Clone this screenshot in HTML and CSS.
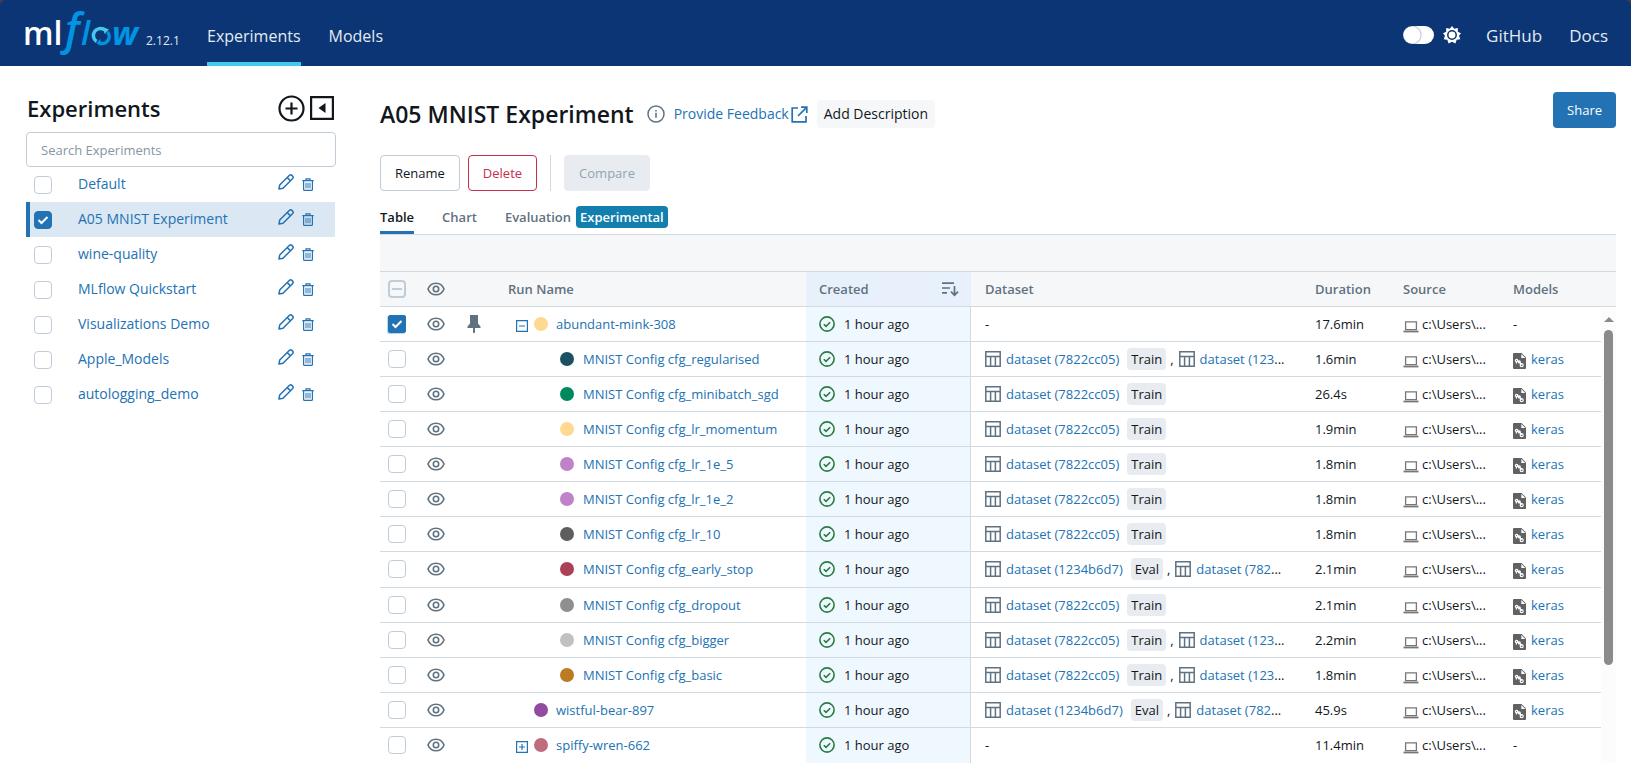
FILE: index.html
```html
<!DOCTYPE html>
<html lang="en">
<head>
<meta charset="utf-8">
<title>A05 MNIST Experiment - MLflow</title>
<link rel="stylesheet" href="styles.css">
</head>
<body>
<svg class="sprite" aria-hidden="true">
  <symbol id="eye" viewBox="0 0 18 18"><g fill="none" stroke="currentColor" stroke-width="1.6"><path d="M1 9C2.5 5.2 5.5 3.2 9 3.2S15.500 5.200 17 9c-1.500 3.800-4.500 5.800-8 5.800S2.500 12.800 1 9z"/><circle cx="9" cy="9" r="2.700"/></g></symbol>
  <symbol id="pin" viewBox="0 0 16 20"><path fill="currentColor" d="M4 1h8v8.500l2.500 3V14H9v4.500l-1 .8-1-.8V14H1.500v-1.500L4 9.500z"/></symbol>
  <symbol id="ok" viewBox="0 0 18 18"><g fill="none" stroke="currentColor" stroke-width="1.600"><circle cx="9" cy="9" r="7.100"/><path d="M5.800 9.200l2.200 2.200 4.200-4.200"/></g></symbol>
  <symbol id="grid" viewBox="0 0 16 16"><path fill="none" stroke="currentColor" stroke-width="1.500" d="M.8.8h14.400v14.400H.8zM.8 5.500h14.400M5.600 5.500v9.700M10.400 5.500v9.700"/></symbol>
  <symbol id="laptop" viewBox="0 0 16 12"><path fill="none" stroke="currentColor" stroke-width="1.300" d="M2.600.9h10.800v7.800H2.600z"/><path fill="currentColor" d="M.5 9.600h15v1.800H.5z"/></symbol>
  <symbol id="model" viewBox="0 0 13 16"><path fill="#5f6163" d="M1 0h7.500L13 4.500V15a1 1 0 0 1-1 1H1a1 1 0 0 1-1-1V1a1 1 0 0 1 1-1z"/><path fill="#fff" d="M8.300 1v4h4z"/><g fill="none" stroke="#fff" stroke-width="1.200"><path d="M4 7.500l2.500 1.200M6.500 9l2 3"/><circle cx="3.600" cy="7.600" r="1.200"/><circle cx="6.300" cy="8.900" r="1"/><circle cx="8.700" cy="12.200" r="1.500"/><path d="M3.400 8.500v2"/></g></symbol>
  <symbol id="pencil" viewBox="0 0 16 16"><g fill="none" stroke="currentColor" stroke-width="1.500" stroke-linejoin="round"><path d="M1 15l.7-4L11.500 1.300q1.200-1 2.400.1l.7.700q1.100 1.200.1 2.400L5 14.300z"/><path d="M9.300 3.600l3.100 3.100"/></g></symbol>
  <symbol id="trash" viewBox="0 0 12 13"><g fill="none" stroke="currentColor"><path stroke-width="1.200" d="M.3 2.700h11.400M4 2.500V.8h4v1.700M1.600 2.700v8.700q0 1 1 1h6.800q1 0 1-1V2.700"/><path d="M4 4.800v5.600M6 4.800v5.600M8 4.800v5.600"/></g></symbol>
  <symbol id="minus" viewBox="0 0 12 12"><path fill="none" stroke="currentColor" stroke-width="1.200" d="M.6.6h10.800v10.800H.6zM3 6h6"/></symbol>
  <symbol id="plus" viewBox="0 0 12 12"><path fill="none" stroke="currentColor" stroke-width="1.200" d="M.6.6h10.800v10.800H.6zM3 6h6M6 3v6"/></symbol>
</svg>

<div class="topwrap">
<header class="topbar">
  <a class="brand" href="#" aria-label="mlflow home">
    <svg class="logo" viewBox="0 0 116 50" role="img" aria-label="mlflow">
      <text class="logo-ml" x="-1" y="37">ml</text>
      <text class="logo-f" x="41" y="37">f</text>
      <text class="logo-l" x="57" y="37">l</text>
      <path class="ring-light" d="M72.500 33.500A7 7 0 0 1 80.500 21.700"/>
      <path class="ring-dark" d="M83.500 24a7 7 0 0 1-9 10.500"/>
      <path fill="#43c9ed" d="M79 19l6 2.500-4.500 4.500z"/>
      <path fill="#0194e2" d="M77 37.500l-5-2.500 4.500-4z"/>
      <text class="logo-w" x="88" y="37">w</text>
    </svg>
  </a>
  <span class="version">2.12.1</span>
  <nav class="nav">
    <a class="active" href="#">Experiments</a>
    <a href="#">Models</a>
  </nav>
  <div class="tools">
    <input class="switch" type="checkbox" aria-label="Dark theme">
    <svg class="sun" viewBox="0 0 18 18"><path fill="#fff" d="M9 0l2.200 2.800L14.900 2l-.1 3.700L18 7.200 16 9.800l1.300 3.400-3.600.6-1.300 3.700L9 15.800l-3.400 1.700-1.300-3.700-3.600-.6L2 9.800 0 7.200l3.200-1.500L3.100 2l3.700.8z"/><circle cx="9" cy="9" r="4.200" fill="#fff" stroke="#0b3574" stroke-width="1.500"/></svg>
  </div>
  <nav class="links"><a href="#">GitHub</a><a href="#">Docs</a></nav>
</header>
</div>

<div class="page">
<aside class="sidebar">
  <div class="side-head">
    <h2>Experiments</h2>
    <button class="icon-btn" aria-label="New experiment"><svg width="27" height="27" viewBox="0 0 27 27"><g fill="none" stroke="#11171c" stroke-width="2.200"><circle cx="13.500" cy="13.500" r="12"/><path d="M7.500 13.500h12M13.500 7.500v12"/></g></svg></button>
    <button class="icon-btn" aria-label="Collapse sidebar"><svg width="24" height="24" viewBox="0 0 24 24"><path fill="none" stroke="#11171c" stroke-width="2.200" d="M1.100 1.100h21.800v21.800H1.100z"/><path fill="#11171c" d="M15.500 7v10L8.500 12z"/></svg></button>
  </div>
  <input class="search" type="text" placeholder="Search Experiments" aria-label="Search Experiments">
  <ul class="exps">
    <li><input class="box" type="checkbox" aria-label="Default"><a href="#">Default</a><button class="edit" aria-label="Rename"><svg width="16" height="16"><use href="#pencil"/></svg></button><button class="del" aria-label="Delete"><svg width="12" height="13"><use href="#trash"/></svg></button></li>
    <li class="on"><input class="box" type="checkbox" checked aria-label="A05 MNIST Experiment"><a href="#">A05 MNIST Experiment</a><button class="edit" aria-label="Rename"><svg width="16" height="16"><use href="#pencil"/></svg></button><button class="del" aria-label="Delete"><svg width="12" height="13"><use href="#trash"/></svg></button></li>
    <li><input class="box" type="checkbox" aria-label="wine-quality"><a href="#">wine-quality</a><button class="edit" aria-label="Rename"><svg width="16" height="16"><use href="#pencil"/></svg></button><button class="del" aria-label="Delete"><svg width="12" height="13"><use href="#trash"/></svg></button></li>
    <li><input class="box" type="checkbox" aria-label="MLflow Quickstart"><a href="#">MLflow Quickstart</a><button class="edit" aria-label="Rename"><svg width="16" height="16"><use href="#pencil"/></svg></button><button class="del" aria-label="Delete"><svg width="12" height="13"><use href="#trash"/></svg></button></li>
    <li><input class="box" type="checkbox" aria-label="Visualizations Demo"><a href="#">Visualizations Demo</a><button class="edit" aria-label="Rename"><svg width="16" height="16"><use href="#pencil"/></svg></button><button class="del" aria-label="Delete"><svg width="12" height="13"><use href="#trash"/></svg></button></li>
    <li><input class="box" type="checkbox" aria-label="Apple_Models"><a href="#">Apple_Models</a><button class="edit" aria-label="Rename"><svg width="16" height="16"><use href="#pencil"/></svg></button><button class="del" aria-label="Delete"><svg width="12" height="13"><use href="#trash"/></svg></button></li>
    <li><input class="box" type="checkbox" aria-label="autologging_demo"><a href="#">autologging_demo</a><button class="edit" aria-label="Rename"><svg width="16" height="16"><use href="#pencil"/></svg></button><button class="del" aria-label="Delete"><svg width="12" height="13"><use href="#trash"/></svg></button></li>
  </ul>
</aside>

<main class="main">
  <div class="title-row">
    <h1>A05 MNIST Experiment</h1>
    <svg class="info" viewBox="0 0 18 18"><circle cx="9" cy="9" r="8" fill="none" stroke="#5f7281" stroke-width="1.500"/><path fill="#5f7281" d="M8.200 7.800h1.600v5H8.200zM8.200 5h1.600v1.600H8.200z"/></svg>
    <a class="feedback" href="#">Provide Feedback<svg width="17" height="17" viewBox="0 0 17 17"><path fill="none" stroke="currentColor" stroke-width="1.700" d="M7 2H1.200v13.800H15V10M10 1.200h5.800V7M15.600 1.400L7 10"/></svg></a>
    <button class="desc">Add Description</button>
    <button class="share">Share</button>
  </div>
  <div class="actions">
    <button class="btn">Rename</button>
    <button class="btn danger">Delete</button>
    <span class="sep"></span>
    <button class="btn muted" disabled>Compare</button>
  </div>
  <div class="tabs" role="tablist">
    <button class="tab sel" role="tab" aria-selected="true">Table</button>
    <button class="tab" role="tab">Chart</button>
    <button class="tab" role="tab">Evaluation<span class="badge">Experimental</span></button>
  </div>
  <div class="band"></div>
  <div class="grid">
  <table>
    <colgroup><col class="c-check"><col class="c-eye"><col class="c-pin"><col class="c-name"><col class="c-created"><col><col class="c-dur"><col class="c-src"><col class="c-models"><col class="c-bar"></colgroup>
    <thead><tr>
      <th><span class="mid"><input class="box" id="all" type="checkbox" aria-label="Select all runs"><span class="dash"></span></span></th>
      <th><svg class="eye"><use href="#eye"/></svg></th><th></th>
      <th class="text">Run Name</th>
      <th class="text created"><span class="sorted">Created<svg width="17" height="15" viewBox="0 0 17 15"><path fill="none" stroke="currentColor" stroke-width="1.700" d="M0 1.200h12M0 6h8M0 10.800h5M12.500 4v9M9 9.700l3.500 3.600L16 9.700"/></svg></span></th>
      <th class="text">Dataset</th><th class="text">Duration</th><th class="text">Source</th><th class="text">Models</th><th></th>
    </tr></thead>
    <tbody>
    <tr><td><input class="box square" type="checkbox" checked aria-label="Select abundant-mink-308"></td><td><svg class="eye"><use href="#eye"/></svg></td><td><svg class="pin"><use href="#pin"/></svg></td><td><div class="run"><button class="tog" aria-label="Collapse"><svg width="12" height="12"><use href="#minus"/></svg></button><i class="dot yellow"></i><a href="#">abundant-mink-308</a></div></td><td class="created"><span class="when"><svg class="ok"><use href="#ok"/></svg>1 hour ago</span></td><td class="text">-</td><td class="text">17.6min</td><td class="text src"><svg class="lap"><use href="#laptop"/></svg>c:\Users\...</td><td class="text">-</td></tr>
    <tr><td><input class="box" type="checkbox" aria-label="Select cfg_regularised"></td><td><svg class="eye"><use href="#eye"/></svg></td><td></td><td><div class="run child"><i class="dot teal"></i><a href="#">MNIST Config cfg_regularised</a></div></td><td class="created"><span class="when"><svg class="ok"><use href="#ok"/></svg>1 hour ago</span></td><td class="text"><svg class="ds"><use href="#grid"/></svg><a href="#">dataset (7822cc05)</a><span class="tag">Train</span><span class="comma">,</span><svg class="ds"><use href="#grid"/></svg><a href="#">dataset (123</a>...</td><td class="text">1.6min</td><td class="text src"><svg class="lap"><use href="#laptop"/></svg>c:\Users\...</td><td class="text"><svg class="mod"><use href="#model"/></svg><a href="#">keras</a></td></tr>
    <tr><td><input class="box" type="checkbox" aria-label="Select cfg_minibatch_sgd"></td><td><svg class="eye"><use href="#eye"/></svg></td><td></td><td><div class="run child"><i class="dot green"></i><a href="#">MNIST Config cfg_minibatch_sgd</a></div></td><td class="created"><span class="when"><svg class="ok"><use href="#ok"/></svg>1 hour ago</span></td><td class="text"><svg class="ds"><use href="#grid"/></svg><a href="#">dataset (7822cc05)</a><span class="tag">Train</span></td><td class="text">26.4s</td><td class="text src"><svg class="lap"><use href="#laptop"/></svg>c:\Users\...</td><td class="text"><svg class="mod"><use href="#model"/></svg><a href="#">keras</a></td></tr>
    <tr><td><input class="box" type="checkbox" aria-label="Select cfg_lr_momentum"></td><td><svg class="eye"><use href="#eye"/></svg></td><td></td><td><div class="run child"><i class="dot yellow"></i><a href="#">MNIST Config cfg_lr_momentum</a></div></td><td class="created"><span class="when"><svg class="ok"><use href="#ok"/></svg>1 hour ago</span></td><td class="text"><svg class="ds"><use href="#grid"/></svg><a href="#">dataset (7822cc05)</a><span class="tag">Train</span></td><td class="text">1.9min</td><td class="text src"><svg class="lap"><use href="#laptop"/></svg>c:\Users\...</td><td class="text"><svg class="mod"><use href="#model"/></svg><a href="#">keras</a></td></tr>
    <tr><td><input class="box" type="checkbox" aria-label="Select cfg_lr_1e_5"></td><td><svg class="eye"><use href="#eye"/></svg></td><td></td><td><div class="run child"><i class="dot lilac"></i><a href="#">MNIST Config cfg_lr_1e_5</a></div></td><td class="created"><span class="when"><svg class="ok"><use href="#ok"/></svg>1 hour ago</span></td><td class="text"><svg class="ds"><use href="#grid"/></svg><a href="#">dataset (7822cc05)</a><span class="tag">Train</span></td><td class="text">1.8min</td><td class="text src"><svg class="lap"><use href="#laptop"/></svg>c:\Users\...</td><td class="text"><svg class="mod"><use href="#model"/></svg><a href="#">keras</a></td></tr>
    <tr><td><input class="box" type="checkbox" aria-label="Select cfg_lr_1e_2"></td><td><svg class="eye"><use href="#eye"/></svg></td><td></td><td><div class="run child"><i class="dot lilac"></i><a href="#">MNIST Config cfg_lr_1e_2</a></div></td><td class="created"><span class="when"><svg class="ok"><use href="#ok"/></svg>1 hour ago</span></td><td class="text"><svg class="ds"><use href="#grid"/></svg><a href="#">dataset (7822cc05)</a><span class="tag">Train</span></td><td class="text">1.8min</td><td class="text src"><svg class="lap"><use href="#laptop"/></svg>c:\Users\...</td><td class="text"><svg class="mod"><use href="#model"/></svg><a href="#">keras</a></td></tr>
    <tr><td><input class="box" type="checkbox" aria-label="Select cfg_lr_10"></td><td><svg class="eye"><use href="#eye"/></svg></td><td></td><td><div class="run child"><i class="dot charcoal"></i><a href="#">MNIST Config cfg_lr_10</a></div></td><td class="created"><span class="when"><svg class="ok"><use href="#ok"/></svg>1 hour ago</span></td><td class="text"><svg class="ds"><use href="#grid"/></svg><a href="#">dataset (7822cc05)</a><span class="tag">Train</span></td><td class="text">1.8min</td><td class="text src"><svg class="lap"><use href="#laptop"/></svg>c:\Users\...</td><td class="text"><svg class="mod"><use href="#model"/></svg><a href="#">keras</a></td></tr>
    <tr><td><input class="box" type="checkbox" aria-label="Select cfg_early_stop"></td><td><svg class="eye"><use href="#eye"/></svg></td><td></td><td><div class="run child"><i class="dot crimson"></i><a href="#">MNIST Config cfg_early_stop</a></div></td><td class="created"><span class="when"><svg class="ok"><use href="#ok"/></svg>1 hour ago</span></td><td class="text"><svg class="ds"><use href="#grid"/></svg><a href="#">dataset (1234b6d7)</a><span class="tag">Eval</span><span class="comma">,</span><svg class="ds"><use href="#grid"/></svg><a href="#">dataset (782</a>...</td><td class="text">2.1min</td><td class="text src"><svg class="lap"><use href="#laptop"/></svg>c:\Users\...</td><td class="text"><svg class="mod"><use href="#model"/></svg><a href="#">keras</a></td></tr>
    <tr><td><input class="box" type="checkbox" aria-label="Select cfg_dropout"></td><td><svg class="eye"><use href="#eye"/></svg></td><td></td><td><div class="run child"><i class="dot grey"></i><a href="#">MNIST Config cfg_dropout</a></div></td><td class="created"><span class="when"><svg class="ok"><use href="#ok"/></svg>1 hour ago</span></td><td class="text"><svg class="ds"><use href="#grid"/></svg><a href="#">dataset (7822cc05)</a><span class="tag">Train</span></td><td class="text">2.1min</td><td class="text src"><svg class="lap"><use href="#laptop"/></svg>c:\Users\...</td><td class="text"><svg class="mod"><use href="#model"/></svg><a href="#">keras</a></td></tr>
    <tr><td><input class="box" type="checkbox" aria-label="Select cfg_bigger"></td><td><svg class="eye"><use href="#eye"/></svg></td><td></td><td><div class="run child"><i class="dot silver"></i><a href="#">MNIST Config cfg_bigger</a></div></td><td class="created"><span class="when"><svg class="ok"><use href="#ok"/></svg>1 hour ago</span></td><td class="text"><svg class="ds"><use href="#grid"/></svg><a href="#">dataset (7822cc05)</a><span class="tag">Train</span><span class="comma">,</span><svg class="ds"><use href="#grid"/></svg><a href="#">dataset (123</a>...</td><td class="text">2.2min</td><td class="text src"><svg class="lap"><use href="#laptop"/></svg>c:\Users\...</td><td class="text"><svg class="mod"><use href="#model"/></svg><a href="#">keras</a></td></tr>
    <tr><td><input class="box" type="checkbox" aria-label="Select cfg_basic"></td><td><svg class="eye"><use href="#eye"/></svg></td><td></td><td><div class="run child"><i class="dot amber"></i><a href="#">MNIST Config cfg_basic</a></div></td><td class="created"><span class="when"><svg class="ok"><use href="#ok"/></svg>1 hour ago</span></td><td class="text"><svg class="ds"><use href="#grid"/></svg><a href="#">dataset (7822cc05)</a><span class="tag">Train</span><span class="comma">,</span><svg class="ds"><use href="#grid"/></svg><a href="#">dataset (123</a>...</td><td class="text">1.8min</td><td class="text src"><svg class="lap"><use href="#laptop"/></svg>c:\Users\...</td><td class="text"><svg class="mod"><use href="#model"/></svg><a href="#">keras</a></td></tr>
    <tr><td><input class="box" type="checkbox" aria-label="Select wistful-bear-897"></td><td><svg class="eye"><use href="#eye"/></svg></td><td></td><td><div class="run flat"><i class="dot purple"></i><a href="#">wistful-bear-897</a></div></td><td class="created"><span class="when"><svg class="ok"><use href="#ok"/></svg>1 hour ago</span></td><td class="text"><svg class="ds"><use href="#grid"/></svg><a href="#">dataset (1234b6d7)</a><span class="tag">Eval</span><span class="comma">,</span><svg class="ds"><use href="#grid"/></svg><a href="#">dataset (782</a>...</td><td class="text">45.9s</td><td class="text src"><svg class="lap"><use href="#laptop"/></svg>c:\Users\...</td><td class="text"><svg class="mod"><use href="#model"/></svg><a href="#">keras</a></td></tr>
    <tr><td><input class="box" type="checkbox" aria-label="Select spiffy-wren-662"></td><td><svg class="eye"><use href="#eye"/></svg></td><td></td><td><div class="run"><button class="tog" aria-label="Expand"><svg width="12" height="12"><use href="#plus"/></svg></button><i class="dot rose"></i><a href="#">spiffy-wren-662</a></div></td><td class="created"><span class="when"><svg class="ok"><use href="#ok"/></svg>1 hour ago</span></td><td class="text">-</td><td class="text">11.4min</td><td class="text src"><svg class="lap"><use href="#laptop"/></svg>c:\Users\...</td><td class="text">-</td></tr>
    </tbody>
  </table>
  <div class="scroll" aria-hidden="true"><i class="arrow"></i><i class="thumb"></i></div>
  </div>
</main>
</div>
</body>
</html>
```
FILE: styles.css
```css
:root {
  --blue: #2272b4;
  --ink: #11171c;
  --soft: #5f7281;
  --line: #d1d9e1;
  --edge: #c0cdd8;
}
* { box-sizing: border-box; }
body {
  display: flex;
  flex-direction: column;
  min-height: 100vh;
  margin: 0;
  font: 13px/20px "Open Sans", "Noto Sans", sans-serif;
  color: var(--ink);
  background: #fff;
}
a { color: var(--blue); text-decoration: none; }
button { font: inherit; color: inherit; background: none; border: 0; padding: 0; }
h1, h2 { margin: 0; line-height: 32px; font-weight: 600; }
h1 { font-size: 23px; }
h2 { font-size: 22px; }
svg { flex: none; }
.sprite { display: none; }

.topwrap { background: #3c3f45; }
.topbar {
  display: flex;
  align-items: stretch;
  height: 66px;
  padding: 0 23px 0 24px;
  background: #0b3574;
  border-radius: 6px 6px 0 0;
}
.brand { display: flex; padding-top: 8px; }
.logo { width: 116px; height: 50px; overflow: visible; }
.logo-ml { font: 600 32px "Open Sans", sans-serif; fill: #fff; }
.logo-f { font: italic 600 43px "Open Sans", sans-serif; fill: #0194e2; }
.logo-l { font: italic 600 33px "Open Sans", sans-serif; fill: #0194e2; }
.logo-w { font: italic 700 33px "Open Sans", sans-serif; fill: #0194e2; }
.ring-light, .ring-dark { fill: none; stroke-width: 3.5; stroke: #43c9ed; }
.ring-dark { stroke: #0194e2; }
.version { align-self: flex-start; width: 67px; padding: 31px 0 0 6px; font-size: 12px; color: #e3ebf3; }
.nav { display: flex; gap: 28px; font-size: 16px; }
.nav a { color: #e3ebf3; padding: 26px 0 16px; border-bottom: 4px solid transparent; }
.nav a.active { border-bottom-color: #43c9ed; }
.tools { display: flex; align-items: center; gap: 9px; margin-left: auto; padding-bottom: 14px; padding-top: 17px; }
.links { display: flex; gap: 27px; margin-left: 25px; font-size: 17px; }
.links a { color: #e3ebf3; padding-top: 26px; }
.sun { width: 18px; height: 18px; }
.switch {
  appearance: none;
  width: 31px;
  height: 18px;
  margin: 0;
  border-radius: 9px;
  background: radial-gradient(circle at 9px 9px, #fff 8px, #b5c3d6 9px, #fff 10px);
}

.page { display: flex; flex: 1; }
.sidebar { flex: none; width: 310px; margin: 24px 44px 0 26px; }
.side-head { display: flex; align-items: center; gap: 5px; height: 36px; padding: 0 2px 0 1px; }
.side-head h2 { flex: 1; }
.icon-btn { display: flex; }
.search {
  display: block;
  width: 100%;
  height: 35px;
  margin-top: 6px;
  padding: 0 14px;
  border: 1px solid var(--edge);
  border-radius: 4px;
  font: inherit;
  color: var(--ink);
}
.search::placeholder { color: #8396a5; }
.exps { list-style: none; margin: 0; padding: 0; font-size: 14px; }
.exps li {
  display: flex;
  align-items: center;
  height: 35px;
  margin-right: 1px;
  padding: 0 21px 0 4px;
  border-left: 4px solid transparent;
}
.exps li.on { background: #dbe7f3; border-left-color: var(--blue); }
.exps a { flex: 1; margin-left: 26px; padding-bottom: 2px; }
.exps button { display: flex; color: var(--blue); }
.edit { padding-bottom: 5px; margin-right: 8px; }

.box {
  appearance: none;
  display: block;
  flex: none;
  width: 18px;
  height: 18px;
  margin: 0;
  border: 1px solid var(--edge);
  border-radius: 4px;
  background: #fff;
}
.box:checked {
  border-color: var(--blue);
  background: var(--blue) url("data:image/svg+xml,%3Csvg xmlns='http://www.w3.org/2000/svg' viewBox='0 0 16 16'%3E%3Cpath fill='none' stroke='white' stroke-width='2' d='M3.500 8l3 3 6-6'/%3E%3C/svg%3E") center / 16px no-repeat;
}
.square:checked { border-radius: 2px; box-shadow: -1px 1px 0 0 #a9dcf5; }

.main { display: flex; flex-direction: column; flex: 1; min-width: 0; margin: 25px 15px 0 0; }
.title-row { display: flex; align-items: center; height: 46px; }
.info { width: 18px; height: 18px; margin: 0 9px 0 13px; }
.feedback { display: flex; align-items: center; gap: 2px; font-size: 14px; }
.desc { margin-left: 9px; padding: 4px 7px; border-radius: 4px; background: #f6f7f9; font-size: 14px; }
.share {
  align-self: flex-start;
  margin: 1px 0 0 auto;
  height: 36px;
  padding: 0 14px;
  border-radius: 4px;
  color: #fff;
  background: var(--blue);
}
.actions { display: flex; gap: 8px; margin-top: 18px; }
.btn { height: 36px; padding: 0 14px; border: 1px solid var(--edge); border-radius: 4px; }
.btn.danger { border-color: #c82d4c; color: #c82d4c; }
.btn.muted { border-color: #e8ecf0; background: #e8ecf0; color: #92a4b3; }
.sep { width: 1px; margin: 0 5px; background: var(--line); }
.tabs { display: flex; gap: 28px; margin-top: 9px; border-bottom: 1px solid var(--line); }
.tab { display: flex; align-items: center; height: 34px; padding-top: 2px; font-weight: 600; color: var(--soft); border-bottom: 3px solid transparent; }
.tab.sel { color: var(--ink); border-bottom-color: var(--blue); }
.badge { margin-left: 5px; padding: 1px 4px; border-radius: 4px; background: #127fae; color: #fff; }
.band { height: 36px; background: #f6f7f9; }

.grid { display: grid; flex: 1; position: relative; }
table { width: 100%; height: 100%; table-layout: fixed; border-collapse: separate; border-spacing: 0; }
.c-check { width: 38px; }
.c-eye { width: 36px; }
.c-pin { width: 40px; }
.c-name { width: 312px; }
.c-created { width: 165px; }
.c-dur { width: 88px; }
.c-src { width: 110px; }
.c-models { width: 102px; }
.c-bar { width: 15px; }
th, td { height: 35px; padding: 0 0 0 8px; border-bottom: 1px solid var(--line); text-align: left; vertical-align: middle; white-space: nowrap; }
th { height: 36px; border-top: 1px solid var(--line); background: #f6f7f9; color: var(--soft); font-weight: 600; }
tbody tr:last-child td { border-bottom: 0; }
.text { padding: 0 14px; overflow: hidden; text-overflow: ellipsis; }
.src { padding-right: 0; }
td.created { padding-left: 12px; background: #f0f8ff; border-right: 1px solid var(--line); }
th.created { padding: 0 12px 0 13px; background: #e8f1fb; }
th .box { background: transparent; border-width: 2px; }
.mid { display: grid; width: 18px; }
.mid > * { grid-area: 1 / 1; }
.dash { place-self: center; width: 10px; height: 2px; background: var(--edge); }
.eye { display: block; width: 18px; height: 18px; margin-left: 1px; color: var(--soft); }
.pin { display: block; width: 16px; height: 20px; margin-left: 4px; color: var(--soft); }
.sorted { display: flex; justify-content: space-between; align-items: center; }
.run { display: flex; align-items: center; padding-left: 14px; }
.run.flat { padding-left: 32px; }
.run.child { padding-left: 58px; }
.tog { display: flex; margin: 4px 6px 0 0; color: var(--blue); }
.dot { width: 14px; height: 14px; margin-right: 8px; border-radius: 50%; }
.child .dot { margin-right: 9px; }
.when { display: flex; align-items: center; gap: 8px; }
.ok { width: 18px; height: 18px; color: #277c43; }
.ds { width: 16px; height: 16px; margin-right: 5px; vertical-align: -3px; color: var(--soft); }
.tag { margin-left: 8px; padding: 2px 4px; border-radius: 4px; background: #e8ecf0; }
.comma { margin: 0 5px 0 4px; }
.lap { width: 16px; height: 12px; margin-right: 3px; vertical-align: -4px; color: #777; }
.mod { width: 13px; height: 16px; margin-right: 5px; vertical-align: -5px; }

.yellow { background: #ffd992; }
.teal { background: #1b5162; }
.green { background: #00895e; }
.lilac { background: #bf82c8; }
.charcoal { background: #5e5e5e; }
.crimson { background: #ab4057; }
.grey { background: #8f8f8f; }
.silver { background: #c1c1c1; }
.amber { background: #ba7b23; }
.purple { background: #914b9f; }
.rose { background: #bf6d7e; }

.scroll {
  position: absolute;
  top: 37px;
  right: 0;
  bottom: 0;
  width: 15px;
  padding: 9px 3px 0;
  background: #fcfcfc;
}
.arrow { display: block; border: 5px solid transparent; border-top: 0; border-bottom: 5px solid #8b8b8b; }
.thumb { display: block; height: 75%; margin-top: 8px; border-radius: 5px; background: #8b8b8b; }
```
